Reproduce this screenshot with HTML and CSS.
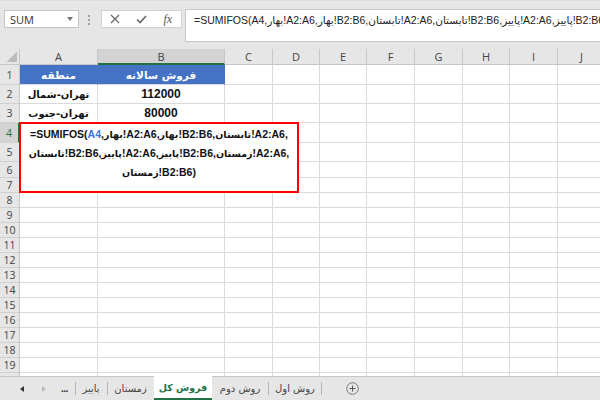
FILE: index.html
```html
<!DOCTYPE html>
<html lang="fa">

<head>
    <meta charset="UTF-8">
    <meta name="viewport" content="width=device-width, initial-scale=1.0">
    <title>SUMIFS - فروش کل</title>
    <link rel="stylesheet" href="styles.css">
</head>

<body>
    <div class="app">
        <div class="formula-row">
            <div class="namebox"><span>SUM</span><span class="caret"></span></div>
            <div class="grip"></div>
            <div class="fbtns">
                <span class="fbtn">
                    <svg width="10" height="10" viewBox="0 0 10 10"><path d="M1 1L9 9M9 1L1 9" stroke="#666" stroke-width="1.2" fill="none"/></svg>
                </span>
                <span class="fbtn">
                    <svg width="11" height="9" viewBox="0 0 11 9"><path d="M1 4.5L4 7.5L10 1" stroke="#666" stroke-width="1.6" fill="none"/></svg>
                </span>
                <span class="fbtn fx">fx</span>
            </div>
            <div class="fbar" dir="ltr">=SUMIFOS(A4,بهار!A2:A6,بهار!B2:B6,تابستان!A2:A6,تابستان!B2:B6,پاییز!A2:A6,پاییز!B2:B6,زمستان!A2:A6,زمستان!B2:B6)</div>
        </div>

        <div class="sheet">
            <div class="grid" id="grid"></div>
            <div class="textbox" dir="ltr">
                =SUMIFOS(<span class="ref">A4</span>,<span class="fa">بهار</span>!A2:A6,<span class="fa">بهار</span>!B2:B6,<span class="fa">تابستان</span>!A2:A6,<br>
                <span class="fa">تابستان</span>!B2:B6,<span class="fa">پاییز</span>!A2:A6,<span class="fa">پاییز</span>!B2:B6,<span class="fa">زمستان</span>!A2:A6,<br>
                <span class="fa">زمستان</span>!B2:B6)
            </div>
        </div>

        <div class="tabs">
            <div class="tab-nav">
                <span class="arrow prev"></span>
                <span class="arrow next"></span>
                <span class="more">...</span>
            </div>
            <span class="tab t-paeez">پاییز</span>
            <span class="tab t-zemestan">زمستان</span>
            <span class="tab active">فروش کل</span>
            <span class="tab t-second">روش دوم</span>
            <span class="tab t-first">روش اول</span>
            <span class="add-sheet">
                <svg width="13" height="13" viewBox="0 0 13 13"><circle cx="6.5" cy="6.5" r="5.8" stroke="#777" fill="none"/><path d="M6.5 3.5V9.5M3.5 6.5H9.5" stroke="#555" stroke-width="1"/></svg>
            </span>
        </div>
    </div>

    <script>
        const sheet = {
            cols: ['A', 'B', 'C', 'D', 'E', 'F', 'G', 'H', 'I', 'J'],
            rows: 20,
            data: {
                1: ['منطقه', 'فروش سالانه'],
                2: ['تهران-شمال', '112000'],
                3: ['تهران-جنوب', '80000']
            },
            grid: null,
            init: function() {
                sheet.grid = document.getElementById('grid');
                sheet.add('corner');
                sheet.cols.forEach((c) => {
                    sheet.add(c === 'B' ? 'colhead sel' : 'colhead', c);
                })
                for (let r = 1; r <= sheet.rows; r++) {
                    sheet.add(r === 4 ? 'rowhead sel' : 'rowhead', r);
                    sheet.cols.forEach((c, i) => {
                        let val = sheet.data[r] ? sheet.data[r][i] : '';
                        let cls = 'cell';
                        if (r === 1 && val) cls += ' title';
                        else if (val) cls += ' value';
                        if (val && isNaN(val)) cls += ' fa';
                        sheet.add(cls, val);
                    })
                }
            },
            add: function(cls, text) {
                let d = document.createElement('div');
                d.className = cls;
                if (text) d.textContent = text;
                sheet.grid.appendChild(d);
            }
        }

        sheet.init();
    </script>
</body>

</html>
```

FILE: styles.css
```css
/**** DEFAULTS ****/

* {
    padding: 0;
    margin: 0;
    box-sizing: border-box;
}

html {
    font-size: 12px;
    font-family: "Liberation Sans", "DejaVu Sans", sans-serif;
    color: #222;
}

body {
    width: 600px;
    height: 400px;
    overflow: hidden;
    background-color: #e6e6e6;
}

.app {
    display: flex;
    flex-direction: column;
    height: 400px;
}

/**** FORMULA BAR ****/

.formula-row {
    height: 49px;
    flex-shrink: 0;
    display: flex;
    align-items: flex-start;
    padding: 10px 0 0 4px;
    background-color: #e6e6e6;
    border-top: 1px solid #dcdcdc;
}

.namebox {
    width: 75px;
    height: 18px;
    margin-top: -1px;
    background-color: #fff;
    border: 1px solid #c6c6c6;
    display: flex;
    align-items: center;
    justify-content: space-between;
    padding: 0 5px 0 5px;
    font-family: "Open Sans", sans-serif;
    font-size: 11px;
    color: #333;
}

.caret {
    border-left: 3px solid transparent;
    border-right: 3px solid transparent;
    border-top: 4px solid #777;
}

.grip {
    width: 2px;
    height: 11px;
    margin: 3px 11px 0 9px;
    background: radial-gradient(circle, #a0a0a0 0.9px, transparent 1.1px) 0 0 / 2px 4px;
}

.fbtns {
    width: 81px;
    height: 18px;
    margin-top: -1px;
    display: flex;
    background-color: #fff;
    border: 1px solid #d2d2d2;
}

.fbtn {
    flex: 1;
    display: flex;
    align-items: center;
    justify-content: center;
}

.fx {
    font-family: "Liberation Serif", serif;
    font-style: italic;
    font-size: 12px;
    color: #555;
}

.fbar {
    flex: 1;
    height: 33px;
    margin: -2px 0 0 3px;
    padding: 4px 0 0 8px;
    background-color: #fff;
    border: 1px solid #c6c6c6;
    border-right: 0;
    white-space: nowrap;
    overflow: hidden;
    font-size: 10.5px;
    color: #222;
}

/**** SHEET ****/

.sheet {
    position: relative;
    height: 327px;
    flex-shrink: 0;
    overflow: hidden;
    background-color: #fff;
}

.grid {
    width: 606px;
    display: grid;
    grid-template-columns: 20px 78px 127px 48px 47px 47px 48px 48px 47px 48px 48px;
    grid-template-rows: 16px 20px 19px 19px 20px 19px 16px 15px repeat(13, 15px);
}

.corner {
    background: #e6e6e6 linear-gradient(135deg, transparent 50%, #bcbcbc 50%) no-repeat right 2px bottom 2px / 10px 10px;
    border-right: 1px solid #c6c6c6;
    border-bottom: 1px solid #c6c6c6;
}

.colhead,
.rowhead {
    display: flex;
    align-items: center;
    justify-content: center;
    background-color: #e6e6e6;
    font-family: "Open Sans", sans-serif;
    font-size: 11px;
    color: #444;
}

.colhead {
    border-right: 1px solid #c8c8c8;
    border-bottom: 1px solid #c6c6c6;
}

.rowhead {
    border-right: 1px solid #c6c6c6;
    border-bottom: 1px solid #d0d0d0;
    font-size: 10.5px;
}

.colhead.sel {
    background-color: #d3d3d3;
    border-bottom: 2px solid #217346;
}

.rowhead.sel {
    background-color: #d3d3d3;
    border-right: 2px solid #217346;
    color: #217346;
}

.cell {
    display: flex;
    align-items: center;
    justify-content: center;
    border-right: 1px solid #dadada;
    border-bottom: 1px solid #dadada;
    font-weight: bold;
    font-size: 12px;
    color: #111;
}

.cell.fa {
    font-family: "DejaVu Sans", sans-serif;
    font-size: 10px;
}

.title {
    background-color: #4472c4;
    border-right-color: #4472c4;
    border-bottom-color: #d8d8d8;
    color: #fff;
}

.cell.title {
    font-size: 10.5px;
}

/* text box drawn over the cells */
.textbox {
    position: absolute;
    left: 19px;
    top: 73px;
    width: 280px;
    height: 71px;
    border: 2px solid #f00;
    background-color: #fff;
    text-align: center;
    font-weight: bold;
    font-size: 10.5px;
    line-height: 18px;
    padding-top: 1px;
    color: #111;
}

.textbox .fa {
    font-family: "DejaVu Sans", sans-serif;
    font-size: 9.5px;
}

.ref {
    color: #3b73d9;
}

/**** SHEET TABS ****/

.tabs {
    flex: 1;
    display: flex;
    align-items: stretch;
    background-color: #e6e6e6;
    border-top: 1px solid #c6c6c6;
    font-family: "DejaVu Sans", sans-serif;
    font-size: 10px;
    color: #444;
}

.tab-nav {
    width: 75px;
    display: flex;
    align-items: center;
}

.arrow {
    width: 0;
    height: 0;
    border-top: 3px solid transparent;
    border-bottom: 3px solid transparent;
}

.prev {
    margin-left: 20px;
    border-right: 4px solid #333;
}

.next {
    margin-left: 18px;
    border-left: 4px solid #bbb;
}

.more {
    margin-left: 15px;
    font-family: "Liberation Sans", sans-serif;
    font-weight: bold;
    color: #333;
    letter-spacing: -0.5px;
}

.tab {
    position: relative;
    display: flex;
    align-items: center;
    justify-content: center;
}

.tab::before {
    content: "";
    position: absolute;
    left: 0;
    top: 5px;
    bottom: 5px;
    border-left: 1px solid #b4b4b4;
}

.t-paeez {
    width: 32px;
}

.t-zemestan {
    width: 47px;
}

.t-second {
    width: 56px;
}

.t-first {
    width: 54px;
}

.t-first::after {
    content: "";
    position: absolute;
    right: 0;
    top: 5px;
    bottom: 5px;
    border-left: 1px solid #b4b4b4;
}

.active {
    width: 58px;
    margin-top: -1px;
    background-color: #fff;
    border-bottom: 2px solid #217346;
    color: #217346;
    font-weight: bold;
    font-size: 9.5px;
}

.active::before,
.t-second::before {
    display: none;
}

.add-sheet {
    display: flex;
    align-items: center;
    margin-left: 24px;
}
```
